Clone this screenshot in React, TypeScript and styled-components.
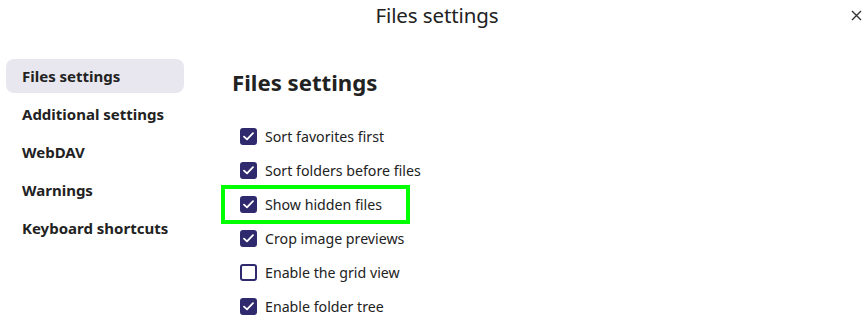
import React from 'react';
import styled, { createGlobalStyle } from 'styled-components';

const GlobalStyle = createGlobalStyle`
  html, body {
    margin: 0;
    padding: 0;
    background: #ffffff;
    font-family: "Noto Sans", "Open Sans", sans-serif;
    color: #222222;
  }
`;

const Dialog = styled.div`
  width: 865px;
  height: 331px;
  position: relative;
  overflow: hidden;
  background: #ffffff;
`;

const Header = styled.div`
  height: 30px;
  display: flex;
  align-items: center;
  justify-content: center;
  padding-left: 9px;
  font-size: 20.5px;
  color: #222222;
  letter-spacing: -0.1px;
`;

const Close = styled.button`
  position: absolute;
  top: 4px;
  right: 0;
  width: 18px;
  height: 22px;
  border: none;
  background: transparent;
  padding: 0;
  display: flex;
  align-items: center;
  justify-content: center;
  color: #333333;
`;

const Body = styled.div`
  display: flex;
  padding: 29px 0 0 6px;
`;

const Nav = styled.nav`
  width: 178px;
  display: flex;
  flex-direction: column;
  gap: 4px;
  flex-shrink: 0;
`;

const NavItem = styled.div<{ $active?: boolean }>`
  height: 34px;
  display: flex;
  align-items: center;
  padding-left: 16px;
  border-radius: 8px;
  background: ${p => (p.$active ? '#e8e7ef' : 'transparent')};
  font-weight: 700;
  font-size: 15px;
  color: #222222;
`;

const Content = styled.section`
  padding-left: 48px;
`;

const Heading = styled.h2`
  margin: 9px 0 21px;
  font-size: 22.2px;
  font-weight: 700;
  line-height: 30px;
  color: #222222;
`;

const List = styled.div`
  display: flex;
  flex-direction: column;
  padding-left: 8px;
`;

const Row = styled.label<{ $highlight?: boolean }>`
  height: 34px;
  display: flex;
  align-items: center;
  gap: 8px;
  font-size: 14.2px;
  color: #222222;
  position: relative;
  ${p =>
    p.$highlight
      ? `
    &::after {
      content: '';
      position: absolute;
      left: -19px;
      top: -2px;
      width: 189px;
      height: 39px;
      border: 4px solid #00ff00;
      box-sizing: border-box;
    }
  `
      : ''}
`;

const Box = styled.span<{ $checked: boolean }>`
  width: 17px;
  height: 17px;
  box-sizing: border-box;
  border-radius: 3px;
  border: 2px solid #2f2a6d;
  background: ${p => (p.$checked ? '#2f2a6d' : '#ffffff')};
  display: flex;
  align-items: center;
  justify-content: center;
  flex-shrink: 0;
`;

const options = [
  { label: 'Sort favorites first', checked: true },
  { label: 'Sort folders before files', checked: true },
  { label: 'Show hidden files', checked: true, highlight: true },
  { label: 'Crop image previews', checked: true },
  { label: 'Enable the grid view', checked: false },
  { label: 'Enable folder tree', checked: true },
];

const navItems = ['Files settings', 'Additional settings', 'WebDAV', 'Warnings', 'Keyboard shortcuts'];

const Check = () => (
  <svg width="11" height="9" viewBox="0 0 11 9" fill="none">
    <path d="M1 4.6 L4 7.4 L10 1.2" stroke="#ffffff" strokeWidth="1.8" strokeLinecap="round" strokeLinejoin="round" />
  </svg>
);

const App = () => (
  <>
    <GlobalStyle />
    <Dialog>
      <Header>Files settings</Header>
      <Close aria-label="Close">
        <svg width="11" height="11" viewBox="0 0 11 11">
          <path d="M1 1 L10 10 M10 1 L1 10" stroke="#333" strokeWidth="1.4" />
        </svg>
      </Close>
      <Body>
        <Nav>
          {navItems.map((item, i) => (
            <NavItem key={item} $active={i === 0}>
              {item}
            </NavItem>
          ))}
        </Nav>
        <Content>
          <Heading>Files settings</Heading>
          <List>
            {options.map(o => (
              <Row key={o.label} $highlight={o.highlight}>
                <Box $checked={o.checked}>{o.checked && <Check />}</Box>
                {o.label}
              </Row>
            ))}
          </List>
        </Content>
      </Body>
    </Dialog>
  </>
);

export default App;
